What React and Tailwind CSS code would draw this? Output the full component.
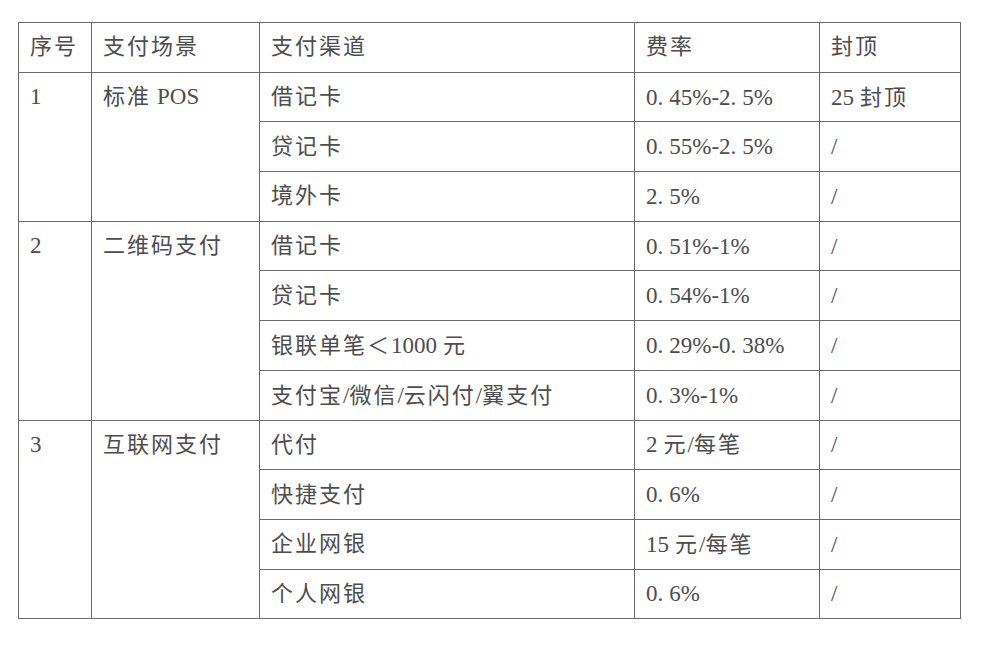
const rows = [
  { no: '1', scene: '标准 POS', items: [
    ['借记卡', '0. 45%-2. 5%', '25 封顶'],
    ['贷记卡', '0. 55%-2. 5%', '/'],
    ['境外卡', '2. 5%', '/'],
  ]},
  { no: '2', scene: '二维码支付', items: [
    ['借记卡', '0. 51%-1%', '/'],
    ['贷记卡', '0. 54%-1%', '/'],
    ['银联单笔＜1000 元', '0. 29%-0. 38%', '/'],
    ['支付宝/微信/云闪付/翼支付', '0. 3%-1%', '/'],
  ]},
  { no: '3', scene: '互联网支付', items: [
    ['代付', '2 元/每笔', '/'],
    ['快捷支付', '0. 6%', '/'],
    ['企业网银', '15 元/每笔', '/'],
    ['个人网银', '0. 6%', '/'],
  ]},
]

// cjk runs get a bit of spacing, latin/digits stay tight like the printed doc
const Txt = ({ s }) =>
  s.split(/([\u4e00-\u9fff\uff00-\uffef]+| )/).map((part, i) => {
    if (part === '') return null
    if (part === ' ') return <span key={i} className="inline-block w-[6px]" />
    if (/[\u4e00-\u9fff\uff00-\uffef]/.test(part))
      return <span key={i} className="text-[22px] tracking-[2px]">{part}</span>
    return <span key={i} className="text-[23px] tracking-normal">{part}</span>
  })

const cell = 'border-[1.5px] border-[#6b6b6b] pl-[11px] pr-2 align-middle whitespace-nowrap'

export default function App() {
  return (
    <div className="w-[998px] h-[648px] bg-white pt-[22px] pl-[18px] text-[#4d4d4d] leading-none"
      style={{ fontFamily: '"Liberation Serif", "Noto Sans CJK SC", serif' }}>
      <table className="border-collapse table-fixed w-[942px]">
        <colgroup>
          <col className="w-[73px]" />
          <col className="w-[168px]" />
          <col className="w-[375px]" />
          <col className="w-[185px]" />
          <col className="w-[141px]" />
        </colgroup>
        <tbody>
          <tr className="h-[49.7px]">
            <td className={cell}><Txt s="序号" /></td>
            <td className={cell}><Txt s="支付场景" /></td>
            <td className={cell}><Txt s="支付渠道" /></td>
            <td className={cell}><Txt s="费率" /></td>
            <td className={cell}><Txt s="封顶" /></td>
          </tr>
          {rows.map((g) =>
            g.items.map((it, i) => (
              <tr key={g.no + i} className="h-[49.7px]">
                {i === 0 && (
                  <>
                    <td rowSpan={g.items.length} className={cell + ' !align-top'}>
                      <div className="h-[48px] flex items-center"><Txt s={g.no} /></div>
                    </td>
                    <td rowSpan={g.items.length} className={cell + ' !align-top'}>
                      <div className="h-[48px] flex items-center"><Txt s={g.scene} /></div>
                    </td>
                  </>
                )}
                <td className={cell}><Txt s={it[0]} /></td>
                <td className={cell}><Txt s={it[1]} /></td>
                <td className={cell}><Txt s={it[2]} /></td>
              </tr>
            ))
          )}
        </tbody>
      </table>
    </div>
  )
}
